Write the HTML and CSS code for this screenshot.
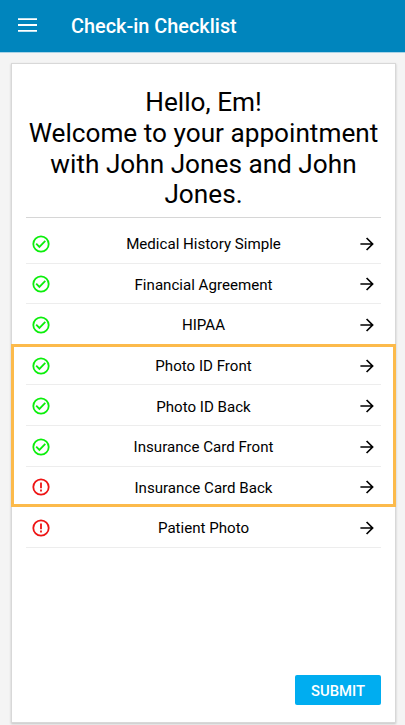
FILE: index.html
```html
<!DOCTYPE html>
<html lang="en">
<head>
<meta charset="utf-8">
<title>Check-in Checklist</title>
<link rel="stylesheet" href="styles.css">
</head>
<body>
<svg class="defs" aria-hidden="true">
  <symbol id="ok" viewBox="0 0 18 18"><circle cx="9" cy="9" r="7.7"/><path d="M4.2 8.6l3.2 3.3 5.9-6"/></symbol>
  <symbol id="alert" viewBox="0 0 18 18"><circle cx="9" cy="9" r="7.7"/><path d="M9 4.6v5.6M9 11.6v1.8"/></symbol>
  <symbol id="arrow" viewBox="0 0 14 14"><path d="M.4 7h12.2M6.6 1l6 6-6 6"/></symbol>
</svg>
<header class="bar">
  <svg class="menu" viewBox="0 0 19 14"><path d="M0 1.2h19M0 7h19M0 12.8h19"/></svg>
  <h1 class="title">Check-in Checklist</h1>
</header>
<main class="card">
  <h2 class="greeting">Hello, Em!<br>Welcome to your appointment<br>with John Jones and John<br>Jones.</h2>
  <ul class="list">
    <li class="row"><svg class="status ok"><use href="#ok"/></svg><span class="label">Medical History Simple</span><svg class="arrow"><use href="#arrow"/></svg></li>
    <li class="row"><svg class="status ok"><use href="#ok"/></svg><span class="label">Financial Agreement</span><svg class="arrow"><use href="#arrow"/></svg></li>
    <li class="row"><svg class="status ok"><use href="#ok"/></svg><span class="label">HIPAA</span><svg class="arrow"><use href="#arrow"/></svg></li>
    <li class="row"><svg class="status ok"><use href="#ok"/></svg><span class="label">Photo ID Front</span><svg class="arrow"><use href="#arrow"/></svg></li>
    <li class="row"><svg class="status ok"><use href="#ok"/></svg><span class="label">Photo ID Back</span><svg class="arrow"><use href="#arrow"/></svg></li>
    <li class="row"><svg class="status ok"><use href="#ok"/></svg><span class="label">Insurance Card Front</span><svg class="arrow"><use href="#arrow"/></svg></li>
    <li class="row"><svg class="status alert"><use href="#alert"/></svg><span class="label">Insurance Card Back</span><svg class="arrow"><use href="#arrow"/></svg></li>
    <li class="row"><svg class="status alert"><use href="#alert"/></svg><span class="label">Patient Photo</span><svg class="arrow"><use href="#arrow"/></svg></li>
  </ul>
  <button class="submit" type="button">SUBMIT</button>
  <div class="highlight"></div>
</main>
</body>
</html>
```

FILE: styles.css
```css
* { box-sizing: border-box; }

body {
  margin: 0;
  height: 725px;
  overflow: hidden;
  display: flex;
  flex-direction: column;
  background: #f4f4f4;
  color: #000;
  font-family: Roboto, sans-serif;
}

.defs { position: absolute; width: 0; height: 0; }

svg { fill: none; flex: none; }

.bar {
  height: 52px;
  flex: none;
  display: flex;
  align-items: center;
  padding: 1px 18px 0;
  background: #0085bd;
  box-shadow: 0 1px 0 #a9d3e6;
}

.menu { width: 19px; height: 14px; margin-top: -3px; stroke: #fff; stroke-width: 1.8; }

.title { margin: 0 0 0 34px; color: #fff; font-size: 19.9px; font-weight: 500; line-height: 24px; white-space: nowrap; }

.card {
  position: relative;
  width: 383px;
  height: 658px;
  flex: none;
  margin: 12px 0 0 12px;
  padding: 23px 14px 17px;
  display: flex;
  flex-direction: column;
  background: #fff;
  box-shadow: 0 0 0 1px #d8d8d8, 0 1px 2px 1px #c4c4c4;
}

.greeting {
  margin: 0 -10px;
  height: 130px;
  font-size: 26.2px;
  font-weight: 400;
  line-height: 30.8px;
  text-align: center;
  white-space: nowrap;
}

.list { list-style: none; margin: 0; padding: 5px 0 0; border-top: 1px solid #d6d6d6; }

.row {
  height: 40.6px;
  display: flex;
  align-items: center;
  padding: 2px 7px 0 6px;
  border-bottom: 1px solid #ededed;
}

/* The callout frame stands in for this divider */
.row:nth-child(7) { border-bottom-color: transparent; }

.status { width: 18px; height: 18px; stroke-width: 1.8; }
.ok { stroke: #0bee0b; }
.alert { stroke: #ee1414; }

.label { flex: 1; font-size: 15.1px; line-height: 20px; text-align: center; white-space: nowrap; padding: 1px 3px 0 0; }

.arrow { width: 14px; height: 14px; stroke: #000; stroke-width: 1.7; }

.submit {
  width: 86px;
  height: 30px;
  margin: auto 0 0 auto;
  padding: 1px 0 0;
  border: 0;
  border-radius: 2px;
  background: #00adf0;
  color: #fff;
  font: 500 14.8px Roboto, sans-serif;
}

/* Orange callout frame drawn over the four document rows */
.highlight {
  position: absolute;
  left: -1px;
  top: 280px;
  width: 385px;
  height: 163px;
  border: 3px solid #fcba4b;
}
```
